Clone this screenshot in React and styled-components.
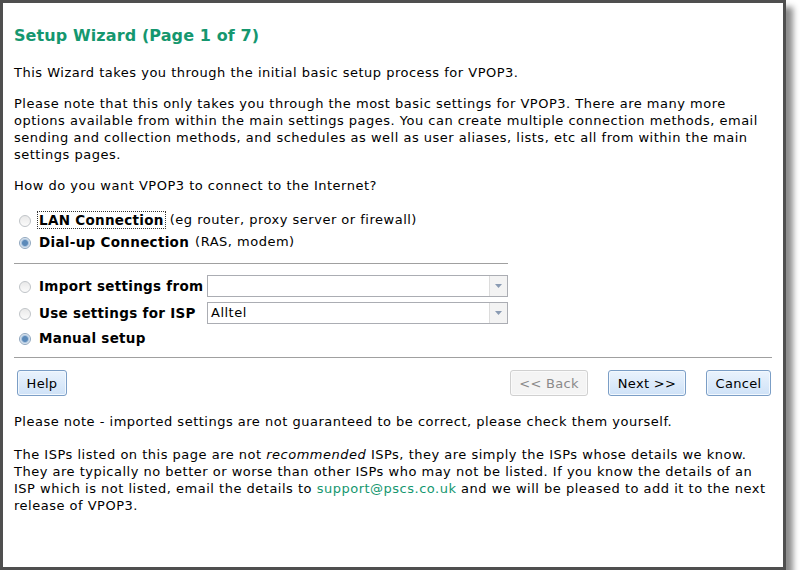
import styled, { createGlobalStyle } from "styled-components";

const GlobalStyle = createGlobalStyle`
  html, body {
    margin: 0;
    padding: 0;
    background: #fff;
  }
  body {
    font-family: "DejaVu Sans", Verdana, sans-serif;
    font-size: 13px;
    letter-spacing: 0.5px;
    color: #000;
  }
`;

const green = "#15976f";

function Radio({ checked, label, note, focused }) {
  return (
    <RadioRow>
      <RadioDot $checked={checked} />
      <RadioLabel $focused={focused}>{label}</RadioLabel>
      {note && <Note>{note}</Note>}
    </RadioRow>
  );
}

function Select({ value }) {
  return (
    <SelectBox>
      <SelectValue>{value}</SelectValue>
      <SelectArrow>
        <svg width="7" height="4" viewBox="0 0 7 4">
          <path d="M0 0h7L3.5 4z" fill="#8a9bb3" />
        </svg>
      </SelectArrow>
    </SelectBox>
  );
}

export default function App() {
  return (
    <>
      <GlobalStyle />
      <Window>
        <Title>Setup Wizard (Page 1 of 7)</Title>
        <Para>This Wizard takes you through the initial basic setup process for VPOP3.</Para>
        <Para>
          Please note that this only takes you through the most basic settings for VPOP3. There are many more
          <br />
          options available from within the main settings pages. You can create multiple connection methods, email
          <br />
          sending and collection methods, and schedules as well as user aliases, lists, etc all from within the main
          <br />
          settings pages.
        </Para>
        <Para>How do you want VPOP3 to connect to the Internet?</Para>

        <Options>
          <Radio label="LAN Connection" note="(eg router, proxy server or firewall)" focused />
          <Radio checked label="Dial-up Connection" note="(RAS, modem)" />
          <ShortRule />
          <SelectRow>
            <Radio label="Import settings from" />
            <Select value="" />
          </SelectRow>
          <SelectRow>
            <Radio label="Use settings for ISP" />
            <Select value="Alltel" />
          </SelectRow>
          <Radio checked label="Manual setup" />
        </Options>

        <FullRule />

        <ButtonBar>
          <Button>Help</Button>
          <Spacer />
          <Button disabled $w={78}>&lt;&lt; Back</Button>
          <Button $w={78}>Next &gt;&gt;</Button>
          <Button $w={65}>Cancel</Button>
        </ButtonBar>

        <Para $gap={16}>Please note - imported settings are not guaranteed to be correct, please check them yourself.</Para>
        <Para>
          The ISPs listed on this page are not <em>recommended</em> ISPs, they are simply the ISPs whose details we know.
          <br />
          They are typically no better or worse than other ISPs who may not be listed. If you know the details of an
          <br />
          ISP which is not listed, email the details to <Link>support@pscs.co.uk</Link> and we will be pleased to add it to the next
          <br />
          release of VPOP3.
        </Para>
      </Window>
    </>
  );
}

const Window = styled.div`
  box-sizing: border-box;
  width: 786px;
  height: 570px;
  border: 3px solid #4f4f4f;
  background: #fff;
  padding: 22px 11px 0 11px;
  box-shadow: 7px 7px 6px rgba(0, 0, 0, 0.45);
  display: flex;
  flex-direction: column;
  overflow: hidden;
`;

const Title = styled.h1`
  margin: 0 0 17px;
  font-size: 16px;
  line-height: 22px;
  font-weight: bold;
  letter-spacing: 0.1px;
  color: ${green};
`;

const Para = styled.p`
  margin: 0 0 ${(p) => (p.$gap ? `${p.$gap}px` : "14px")};
  line-height: 17px;
  white-space: nowrap;

  em {
    font-style: italic;
  }
`;

const Options = styled.div`
  display: flex;
  flex-direction: column;
  gap: 5px;
  width: 494px;
  margin-top: 3px;
`;

const RadioRow = styled.div`
  display: flex;
  align-items: center;
  height: 17px;
`;

const RadioDot = styled.span`
  box-sizing: border-box;
  width: 12px;
  height: 12px;
  margin: 2px 7px 0 5px;
  border-radius: 50%;
  border: 1px solid ${(p) => (p.$checked ? "#8fa6be" : "#c0c4c8")};
  background: ${(p) =>
    p.$checked
      ? "radial-gradient(circle, #5c8ab9 0 2.5px, #a9c3de 3.5px, #eef2f6 5px)"
      : "linear-gradient(#e9e9e9, #fbfbfb)"};
  flex: none;
`;

const RadioLabel = styled.span`
  font-weight: bold;
  font-size: 13.5px;
  letter-spacing: 0.3px;
  padding: 0 1px;
  outline: ${(p) => (p.$focused ? "1px dotted #333" : "none")};
`;

const Note = styled.span`
  margin-left: 5px;
`;

const ShortRule = styled.div`
  height: 1px;
  background: #a0a0a0;
  margin: 8px 0 6px;
`;

const SelectRow = styled.div`
  display: grid;
  grid-template-columns: 193px 1fr;
  align-items: center;
  height: 22px;
`;

const SelectBox = styled.div`
  box-sizing: border-box;
  height: 22px;
  border: 1px solid #abadb3;
  display: flex;
  background: #fff;
`;

const SelectValue = styled.div`
  flex: 1;
  padding: 2px 3px;
  line-height: 16px;
`;

const SelectArrow = styled.div`
  width: 17px;
  border-left: 1px solid #dcdcdc;
  background: #f3f3f3;
  display: flex;
  align-items: center;
  justify-content: center;
`;

const FullRule = styled.div`
  height: 1px;
  background: #a0a0a0;
  margin: 11px 0 12px;
`;

const ButtonBar = styled.div`
  display: flex;
  align-items: center;
  gap: 20px;
  padding: 0 1px 0 3px;
  margin-bottom: 17px;
`;

const Spacer = styled.div`
  flex: 1;
`;

const Button = styled.button`
  box-sizing: border-box;
  height: 26px;
  min-width: ${(p) => (p.$w ? `${p.$w}px` : "50px")};
  padding: 0 8px;
  font-family: "DejaVu Sans", Verdana, sans-serif;
  font-size: 13px;
  letter-spacing: 0.3px;
  border-radius: 3px;
  border: 1px solid ${(p) => (p.disabled ? "#d0d0d0" : "#7b9ec6")};
  color: ${(p) => (p.disabled ? "#8a8a8a" : "#000")};
  background: ${(p) =>
    p.disabled ? "#f4f4f4" : "linear-gradient(#eaf3fd, #cfe2f7)"};
  box-shadow: inset 0 0 0 1px ${(p) => (p.disabled ? "#fafafa" : "#f2f8fe")};
`;

const Link = styled.span`
  color: ${green};
`;
